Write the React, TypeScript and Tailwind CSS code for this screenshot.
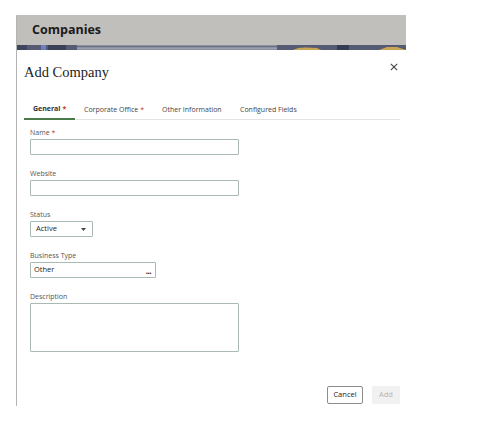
const sans = { fontFamily: '"Open Sans", "Noto Sans", sans-serif' }

function Field({ label, required, children }: { label: string; required?: boolean; children: React.ReactNode }) {
  return (
    <div>
      <div className="h-[10px] text-[7px] leading-[10px] text-[#555]">
        {label}
        {required && <span className="text-[#c23a2e]"> *</span>}
      </div>
      <div className="mt-px">{children}</div>
    </div>
  )
}

function Banner() {
  return (
    <svg width="389" height="5" viewBox="0 0 389 5" className="block">
      <rect width="389" height="5" fill="#545b73" />
      <rect x="0" width="10" height="5" fill="#3e4660" />
      <rect x="24" width="5" height="5" fill="#6f7fc4" />
      <rect x="31" width="18" height="5" fill="#3b4258" />
      <rect x="60" width="200" height="5" fill="#8c90a0" />
      <rect x="60" y="1" width="200" height="1" fill="#6c7186" />
      <rect x="60" y="3" width="200" height="1" fill="#9ca0ae" />
      <path d="M276 5 C280 2 290 2 300 3 L304 5 Z" fill="#c8a555" />
      <rect x="320" width="12" height="5" fill="#343b52" />
      <path d="M362 5 L370 2 L380 2 L389 5 Z" fill="#c9a656" />
    </svg>
  )
}

export default function App() {
  const tabs = [
    { name: 'General', required: true, w: 'w-[51px]', active: true },
    { name: 'Corporate Office', required: true, w: 'w-[78px]' },
    { name: 'Other Information', w: 'w-[78px]' },
    { name: 'Configured Fields', w: 'w-[80px]' },
  ]

  return (
    <div className="w-[480px] h-[426px] bg-white pt-[15px] pl-[16px]" style={sans}>
      <div className="w-[390px] border-l border-[#b4b4b4]">
        <div className="h-[30px] bg-[#c1bfbc] flex items-center pl-[15px]">
          <h1 className="text-[12.5px] font-bold text-[#1a1a1a] leading-none">Companies</h1>
        </div>
        <Banner />

        {/* Dialog */}
        <div className="h-[356px] bg-white flex flex-col pl-[7px] pr-[6px]">
          <div className="flex justify-between items-start pt-[12px]">
            <h2 className="text-[14.5px] leading-[20px] text-[#222]" style={{ fontFamily: '"Liberation Serif", serif' }}>
              Add Company
            </h2>
            <svg width="8" height="8" viewBox="0 0 8 8" className="mt-[1px] mr-[2px]">
              <path d="M0.8 0.8 L7.2 7.2 M7.2 0.8 L0.8 7.2" stroke="#444" strokeWidth="1.1" />
            </svg>
          </div>

          {/* Tabs */}
          <div className="mt-[19px] flex border-b border-[#e3e3e3]">
            {tabs.map(t => (
              <div
                key={t.name}
                className={`${t.w} h-[19px] -mb-px flex items-center pl-[9px] text-[7px] whitespace-nowrap ${
                  t.active ? 'border-b-2 border-[#4b7a49] font-bold text-[#333]' : 'text-[#444]'
                }`}
              >
                {t.name}
                {t.required && <span className="text-[#c23a2e] ml-[2px]">*</span>}
              </div>
            ))}
          </div>

          {/* Form */}
          <div className="pl-[6px] mt-[8px] flex flex-col gap-[14px]">
            <Field label="Name" required>
              <div className="w-[209px] h-[16px] border border-[#a9bab3] rounded-[1px]" />
            </Field>
            <Field label="Website">
              <div className="w-[209px] h-[16px] border border-[#a9bab3] rounded-[1px]" />
            </Field>
            <Field label="Status">
              <div className="w-[63px] h-[16px] border border-[#a9bab3] rounded-[1px] flex items-center justify-between pl-[5px] pr-[6px] text-[7.5px] text-[#222]">
                Active
                <svg width="5" height="3" viewBox="0 0 5 3"><path d="M0 0 L5 0 L2.5 3 Z" fill="#444" /></svg>
              </div>
            </Field>
            <Field label="Business Type">
              <div className="w-[126px] h-[16px] border border-[#a9bab3] rounded-[1px] flex items-center justify-between pl-[3px] pr-[4px] text-[7.5px] text-[#222]">
                Other
                <span className="text-[8px] font-bold leading-none tracking-[-0.5px] mt-[2px]">...</span>
              </div>
            </Field>
            <Field label="Description">
              <div className="w-[209px] h-[49px] border border-[#a9bab3] rounded-[1px]" />
            </Field>
          </div>

          {/* Footer */}
          <div className="mt-auto pb-[2px] flex justify-end gap-[9px]">
            <button className="w-[36px] h-[18px] border border-[#8c8c8c] rounded-[2px] text-[7.5px] text-[#222] bg-white">
              Cancel
            </button>
            <button className="w-[28px] h-[18px] rounded-[2px] text-[7.5px] text-[#b3b3b3] bg-[#f1f1f1]">
              Add
            </button>
          </div>
        </div>
      </div>
    </div>
  )
}
